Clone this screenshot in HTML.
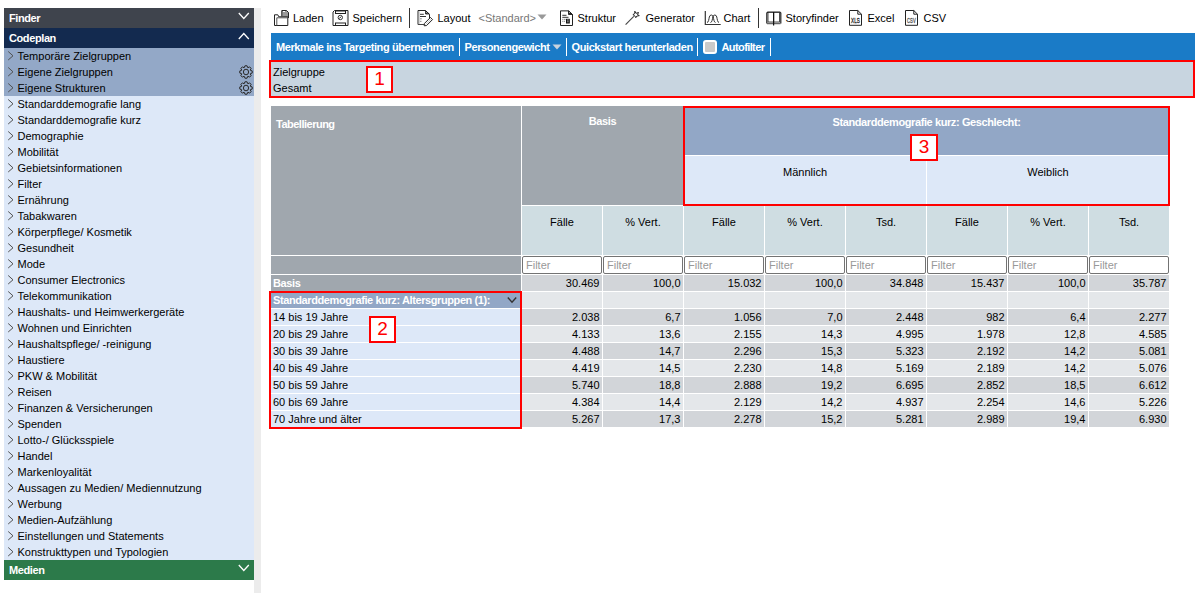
<!DOCTYPE html>
<html><head><meta charset="utf-8"><style>
*{box-sizing:border-box;margin:0;padding:0}
html,body{width:1195px;height:593px;overflow:hidden;background:#fff;font-family:"Liberation Sans",sans-serif;font-size:11px;color:#000;position:relative}
.hdr{position:absolute;left:4px;width:250px;height:20px;color:#fff;font-weight:bold;letter-spacing:-0.4px;padding-left:5px;line-height:20px}
.hchev{position:absolute;left:234px;top:4px}
.it{position:absolute;left:4px;width:250px;height:16px;line-height:16px;background:#dde8f8;padding-left:13.5px;white-space:nowrap}
.it.sel{background:#93a8c7}
.chev{position:absolute;left:3px;top:3px}
.gear{position:absolute;left:234.5px;top:1px}
.strip{position:absolute;left:254px;top:8px;width:7px;height:585px;background:#ececec}
.ico{position:absolute}
.tool{position:absolute;top:10px;height:16px;line-height:16px;white-space:nowrap}
.sep{position:absolute;top:8px;width:1px;height:20px;background:#333}
.bar{position:absolute;left:271px;top:33px;width:924px;height:27px;background:#1a7bc7;color:#fff;font-weight:bold;letter-spacing:-0.4px}
.bar span{position:absolute;top:1px;line-height:27px;white-space:nowrap}
.bsep{position:absolute;top:5px;width:1px;height:18px;background:#fff}
.zg{position:absolute;left:269px;top:60px;width:926px;height:38px;border:2px solid #f00;background:#c8d5e0}
.redbox{position:absolute;border:2px solid #f00;pointer-events:none}
.num-lbl{position:absolute;border:2px solid #f00;background:#fff;color:#f00;font-size:19px;text-align:center}
.th,.flt,.num,.rowlab{position:absolute;overflow:hidden;white-space:nowrap}
.g{background:#a0a7ae;color:#fff}
.gb{background:#92a7c6;color:#fff}
.lb{background:#dde8f8}
.ms{background:#cfdde2}
.d{background:#d2d5d9}
.l{background:#e4e7ea}
.tl{position:absolute;left:5px;top:12px;font-weight:bold;letter-spacing:-0.5px;font-size:11px}
.tb{position:absolute;left:0;right:0;top:9px;text-align:center;font-weight:bold;letter-spacing:-0.4px}
.tgs{position:absolute;left:0;right:0;top:10px;text-align:center;font-weight:bold;letter-spacing:-0.4px}
.tm{position:absolute;left:0;right:0;top:10px;text-align:center}
.tms{position:absolute;left:0;right:0;top:10px;text-align:center}
.flt{background:#fff;border:1px solid #737373;border-radius:2px;color:#999;font-size:11px;line-height:17px;padding-left:3px}
.num{text-align:right;padding-right:2.5px;line-height:16px}
.rowlab{line-height:16px;padding-left:2px}
.bl{font-weight:bold;letter-spacing:-0.4px}
.schev{position:absolute;left:236px;top:4px}
</style></head><body>
<div class="hdr" style="top:8px;background:#3f444d">Finder<svg class="hchev" width="12" height="9" viewBox="0 0 12 9"><path d="M0.8 1 L5.8 6.5 L10.8 1" fill="none" stroke="#fff" stroke-width="1.3"/></svg></div>
<div class="hdr" style="top:28px;background:#132a4f">Codeplan<svg class="hchev" width="12" height="9" viewBox="0 0 12 9"><path d="M0.8 7 L5.8 1.5 L10.8 7" fill="none" stroke="#fff" stroke-width="1.3"/></svg></div>
<div class="it sel" style="top:48px"><svg class="chev" width="8" height="12" viewBox="0 0 8 12"><path d="M1.2 0.5 L6 4.8 L1.2 9" fill="none" stroke="#505050" stroke-width="1"/></svg>Temporäre Zielgruppen</div>
<div class="it sel" style="top:64px"><svg class="chev" width="8" height="12" viewBox="0 0 8 12"><path d="M1.2 0.5 L6 4.8 L1.2 9" fill="none" stroke="#505050" stroke-width="1"/></svg>Eigene Zielgruppen<svg class="gear" width="14" height="14" viewBox="0 0 14 14"><path d="M11.40 5.34 L13.21 5.93 L13.21 8.07 L11.40 8.66 L11.28 8.94 L12.14 10.64 L10.64 12.14 L8.94 11.28 L8.66 11.40 L8.07 13.21 L5.93 13.21 L5.34 11.40 L5.06 11.28 L3.36 12.14 L1.86 10.64 L2.72 8.94 L2.60 8.66 L0.79 8.07 L0.79 5.93 L2.60 5.34 L2.72 5.06 L1.86 3.36 L3.36 1.86 L5.06 2.72 L5.34 2.60 L5.93 0.79 L8.07 0.79 L8.66 2.60 L8.94 2.72 L10.64 1.86 L12.14 3.36 L11.28 5.06 Z" fill="none" stroke="#2a2a2a" stroke-width="1"/><ellipse cx="7" cy="7" rx="2.6" ry="2.8" fill="none" stroke="#2a2a2a" stroke-width="1"/></svg></div>
<div class="it sel" style="top:80px"><svg class="chev" width="8" height="12" viewBox="0 0 8 12"><path d="M1.2 0.5 L6 4.8 L1.2 9" fill="none" stroke="#505050" stroke-width="1"/></svg>Eigene Strukturen<svg class="gear" width="14" height="14" viewBox="0 0 14 14"><path d="M11.40 5.34 L13.21 5.93 L13.21 8.07 L11.40 8.66 L11.28 8.94 L12.14 10.64 L10.64 12.14 L8.94 11.28 L8.66 11.40 L8.07 13.21 L5.93 13.21 L5.34 11.40 L5.06 11.28 L3.36 12.14 L1.86 10.64 L2.72 8.94 L2.60 8.66 L0.79 8.07 L0.79 5.93 L2.60 5.34 L2.72 5.06 L1.86 3.36 L3.36 1.86 L5.06 2.72 L5.34 2.60 L5.93 0.79 L8.07 0.79 L8.66 2.60 L8.94 2.72 L10.64 1.86 L12.14 3.36 L11.28 5.06 Z" fill="none" stroke="#2a2a2a" stroke-width="1"/><ellipse cx="7" cy="7" rx="2.6" ry="2.8" fill="none" stroke="#2a2a2a" stroke-width="1"/></svg></div>
<div class="it" style="top:96px"><svg class="chev" width="8" height="12" viewBox="0 0 8 12"><path d="M1.2 0.5 L6 4.8 L1.2 9" fill="none" stroke="#505050" stroke-width="1"/></svg>Standarddemografie lang</div>
<div class="it" style="top:112px"><svg class="chev" width="8" height="12" viewBox="0 0 8 12"><path d="M1.2 0.5 L6 4.8 L1.2 9" fill="none" stroke="#505050" stroke-width="1"/></svg>Standarddemografie kurz</div>
<div class="it" style="top:128px"><svg class="chev" width="8" height="12" viewBox="0 0 8 12"><path d="M1.2 0.5 L6 4.8 L1.2 9" fill="none" stroke="#505050" stroke-width="1"/></svg>Demographie</div>
<div class="it" style="top:144px"><svg class="chev" width="8" height="12" viewBox="0 0 8 12"><path d="M1.2 0.5 L6 4.8 L1.2 9" fill="none" stroke="#505050" stroke-width="1"/></svg>Mobilität</div>
<div class="it" style="top:160px"><svg class="chev" width="8" height="12" viewBox="0 0 8 12"><path d="M1.2 0.5 L6 4.8 L1.2 9" fill="none" stroke="#505050" stroke-width="1"/></svg>Gebietsinformationen</div>
<div class="it" style="top:176px"><svg class="chev" width="8" height="12" viewBox="0 0 8 12"><path d="M1.2 0.5 L6 4.8 L1.2 9" fill="none" stroke="#505050" stroke-width="1"/></svg>Filter</div>
<div class="it" style="top:192px"><svg class="chev" width="8" height="12" viewBox="0 0 8 12"><path d="M1.2 0.5 L6 4.8 L1.2 9" fill="none" stroke="#505050" stroke-width="1"/></svg>Ernährung</div>
<div class="it" style="top:208px"><svg class="chev" width="8" height="12" viewBox="0 0 8 12"><path d="M1.2 0.5 L6 4.8 L1.2 9" fill="none" stroke="#505050" stroke-width="1"/></svg>Tabakwaren</div>
<div class="it" style="top:224px"><svg class="chev" width="8" height="12" viewBox="0 0 8 12"><path d="M1.2 0.5 L6 4.8 L1.2 9" fill="none" stroke="#505050" stroke-width="1"/></svg>Körperpflege/ Kosmetik</div>
<div class="it" style="top:240px"><svg class="chev" width="8" height="12" viewBox="0 0 8 12"><path d="M1.2 0.5 L6 4.8 L1.2 9" fill="none" stroke="#505050" stroke-width="1"/></svg>Gesundheit</div>
<div class="it" style="top:256px"><svg class="chev" width="8" height="12" viewBox="0 0 8 12"><path d="M1.2 0.5 L6 4.8 L1.2 9" fill="none" stroke="#505050" stroke-width="1"/></svg>Mode</div>
<div class="it" style="top:272px"><svg class="chev" width="8" height="12" viewBox="0 0 8 12"><path d="M1.2 0.5 L6 4.8 L1.2 9" fill="none" stroke="#505050" stroke-width="1"/></svg>Consumer Electronics</div>
<div class="it" style="top:288px"><svg class="chev" width="8" height="12" viewBox="0 0 8 12"><path d="M1.2 0.5 L6 4.8 L1.2 9" fill="none" stroke="#505050" stroke-width="1"/></svg>Telekommunikation</div>
<div class="it" style="top:304px"><svg class="chev" width="8" height="12" viewBox="0 0 8 12"><path d="M1.2 0.5 L6 4.8 L1.2 9" fill="none" stroke="#505050" stroke-width="1"/></svg>Haushalts- und Heimwerkergeräte</div>
<div class="it" style="top:320px"><svg class="chev" width="8" height="12" viewBox="0 0 8 12"><path d="M1.2 0.5 L6 4.8 L1.2 9" fill="none" stroke="#505050" stroke-width="1"/></svg>Wohnen und Einrichten</div>
<div class="it" style="top:336px"><svg class="chev" width="8" height="12" viewBox="0 0 8 12"><path d="M1.2 0.5 L6 4.8 L1.2 9" fill="none" stroke="#505050" stroke-width="1"/></svg>Haushaltspflege/ -reinigung</div>
<div class="it" style="top:352px"><svg class="chev" width="8" height="12" viewBox="0 0 8 12"><path d="M1.2 0.5 L6 4.8 L1.2 9" fill="none" stroke="#505050" stroke-width="1"/></svg>Haustiere</div>
<div class="it" style="top:368px"><svg class="chev" width="8" height="12" viewBox="0 0 8 12"><path d="M1.2 0.5 L6 4.8 L1.2 9" fill="none" stroke="#505050" stroke-width="1"/></svg>PKW &amp; Mobilität</div>
<div class="it" style="top:384px"><svg class="chev" width="8" height="12" viewBox="0 0 8 12"><path d="M1.2 0.5 L6 4.8 L1.2 9" fill="none" stroke="#505050" stroke-width="1"/></svg>Reisen</div>
<div class="it" style="top:400px"><svg class="chev" width="8" height="12" viewBox="0 0 8 12"><path d="M1.2 0.5 L6 4.8 L1.2 9" fill="none" stroke="#505050" stroke-width="1"/></svg>Finanzen &amp; Versicherungen</div>
<div class="it" style="top:416px"><svg class="chev" width="8" height="12" viewBox="0 0 8 12"><path d="M1.2 0.5 L6 4.8 L1.2 9" fill="none" stroke="#505050" stroke-width="1"/></svg>Spenden</div>
<div class="it" style="top:432px"><svg class="chev" width="8" height="12" viewBox="0 0 8 12"><path d="M1.2 0.5 L6 4.8 L1.2 9" fill="none" stroke="#505050" stroke-width="1"/></svg>Lotto-/ Glücksspiele</div>
<div class="it" style="top:448px"><svg class="chev" width="8" height="12" viewBox="0 0 8 12"><path d="M1.2 0.5 L6 4.8 L1.2 9" fill="none" stroke="#505050" stroke-width="1"/></svg>Handel</div>
<div class="it" style="top:464px"><svg class="chev" width="8" height="12" viewBox="0 0 8 12"><path d="M1.2 0.5 L6 4.8 L1.2 9" fill="none" stroke="#505050" stroke-width="1"/></svg>Markenloyalität</div>
<div class="it" style="top:480px"><svg class="chev" width="8" height="12" viewBox="0 0 8 12"><path d="M1.2 0.5 L6 4.8 L1.2 9" fill="none" stroke="#505050" stroke-width="1"/></svg>Aussagen zu Medien/ Mediennutzung</div>
<div class="it" style="top:496px"><svg class="chev" width="8" height="12" viewBox="0 0 8 12"><path d="M1.2 0.5 L6 4.8 L1.2 9" fill="none" stroke="#505050" stroke-width="1"/></svg>Werbung</div>
<div class="it" style="top:512px"><svg class="chev" width="8" height="12" viewBox="0 0 8 12"><path d="M1.2 0.5 L6 4.8 L1.2 9" fill="none" stroke="#505050" stroke-width="1"/></svg>Medien-Aufzählung</div>
<div class="it" style="top:528px"><svg class="chev" width="8" height="12" viewBox="0 0 8 12"><path d="M1.2 0.5 L6 4.8 L1.2 9" fill="none" stroke="#505050" stroke-width="1"/></svg>Einstellungen und Statements</div>
<div class="it" style="top:544px"><svg class="chev" width="8" height="12" viewBox="0 0 8 12"><path d="M1.2 0.5 L6 4.8 L1.2 9" fill="none" stroke="#505050" stroke-width="1"/></svg>Konstrukttypen und Typologien</div>
<div class="hdr" style="top:560px;background:#2c7a4a">Medien<svg class="hchev" width="12" height="9" viewBox="0 0 12 9"><path d="M0.8 1 L5.8 6.5 L10.8 1" fill="none" stroke="#fff" stroke-width="1.3"/></svg></div>
<div class="strip"></div>
<svg class="ico" style="left:271px;top:8px" width="20" height="20" viewBox="0 0 20 20"><path d="M10.8 8.5 V2.5 H15.5 L17.5 4.5 V10" fill="#9a9a9a" stroke="#222" stroke-width="1"/><path d="M12 3.5 h2" stroke="#fff" stroke-width="1"/><path d="M3.5 17.5 V6.8 H6.8 L7.8 8.8 H16.8 V17.5 Z" fill="#fff" stroke="#222" stroke-width="1"/><path d="M5.8 17.5 V9.8 H16.8" fill="none" stroke="#555" stroke-width="1"/></svg>
<div class="tool" style="left:293px">Laden</div>
<svg class="ico" style="left:330px;top:8px" width="20" height="20" viewBox="0 0 20 20"><path d="M3 17.5 V4 L4.5 2.5 H18 V17.5 Z" fill="#fff" stroke="#222" stroke-width="1"/><path d="M17.5 3 V17" stroke="#888" stroke-width="1.2"/><rect x="5.5" y="3" width="10" height="2.5" fill="#fff" stroke="#222" stroke-width="1"/><circle cx="10.3" cy="9.5" r="2.2" fill="none" stroke="#333" stroke-width="1"/><path d="M9.3 10.5 L11 8.7" stroke="#111" stroke-width="1"/><rect x="5.5" y="15" width="10" height="2.5" fill="#fff" stroke="#222" stroke-width="1"/></svg>
<div class="tool" style="left:352.5px">Speichern</div>
<div class="sep" style="left:409px"></div>
<svg class="ico" style="left:415px;top:8px" width="20" height="20" viewBox="0 0 20 20"><path d="M3 16.5 V2.5 H10.5 L14.5 6.5 V11" fill="#fff" stroke="#222" stroke-width="1"/><path d="M3.9 3.2 V16" stroke="#999" stroke-width="1"/><path d="M10.6 2.8 V6 H14.3 Z" fill="#333" stroke="#111" stroke-width="0.8"/><path d="M11.3 4.4 L12.3 5.2" stroke="#fff" stroke-width="0.8"/><path d="M3 16.5 H9" stroke="#444" stroke-width="1"/><path d="M5 6.3 H8.8 M5 8.5 H11" stroke="#333" stroke-width="1"/><path d="M5 10.8 H6.8 M5 13.3 H6.5" stroke="#888" stroke-width="1"/><path d="M15.44 9.44 L17.56 11.56 L11.56 17.56 L9.2 17.8 L9.44 15.44 Z" fill="#fff" stroke="#222" stroke-width="1"/><path d="M10.6 16.6 L16.4 10.8" stroke="#bbb" stroke-width="0.8"/></svg>
<div class="tool" style="left:437.5px">Layout</div>
<div class="tool" style="left:478.5px;color:#777">&lt;Standard&gt;</div>
<svg class="ico" style="left:537px;top:14px" width="10" height="6" viewBox="0 0 10 6"><path d="M0.5 0.5 H9.5 L5 5.5 Z" fill="#999"/></svg>
<svg class="ico" style="left:557px;top:8px" width="20" height="20" viewBox="0 0 20 20"><path d="M3.5 17.5 V2.8 H11.5 L15.5 6.8 V17.5 Z" fill="#fff" stroke="#222" stroke-width="1"/><path d="M4 3.2 H11" stroke="#999" stroke-width="0.8"/><path d="M11.5 2.8 V6.5 H15.5 Z" fill="#222" stroke="#111" stroke-width="0.8"/><path d="M12.2 4.3 L13 5.1" stroke="#fff" stroke-width="0.8"/><path d="M5.3 7.3 H9.5 M5.3 9.3 H11.5" stroke="#333" stroke-width="1"/><path d="M5.3 11.3 H9 M5.3 13.3 H8.5" stroke="#777" stroke-width="1" stroke-dasharray="1 0.6"/><rect x="9" y="10.8" width="3.8" height="4.7" fill="#111"/><path d="M10 12 H11.8 M10 13.8 H11.8" stroke="#ddd" stroke-width="0.7"/></svg>
<div class="tool" style="left:577.5px">Struktur</div>
<svg class="ico" style="left:622px;top:8px" width="20" height="20" viewBox="0 0 20 20"><path d="M3.6 16.6 L11.8 8.4" stroke="#444" stroke-width="1.1"/><path d="M12.8 3.2 L14.1 5.3 L16.5 4.5 L15.5 6.6 L17.3 7.6 L14.8 8.1 L13.8 9.7 L12.8 7.9 L10.9 6.6 L12.8 5.6 Z" fill="#fff" stroke="#222" stroke-width="1"/></svg>
<div class="tool" style="left:645.5px">Generator</div>
<svg class="ico" style="left:702px;top:8px" width="20" height="20" viewBox="0 0 20 20"><path d="M3.3 3 V16.5 H18.7" fill="none" stroke="#333" stroke-width="1.2"/><path d="M5 14.5 C6.6 14.5 6.9 11 7.3 9 Q7.8 7 9.3 7 Q10.8 7 11.3 9 C11.7 11 12 14.5 13.5 14.5" fill="none" stroke="#333" stroke-width="1"/><path d="M8.5 14.5 C10.1 14.5 10.4 11 10.8 9 Q11.3 7 12.8 7 Q14.3 7 14.8 9 C15.2 11 15.5 14.5 17 14.5" fill="none" stroke="#333" stroke-width="1"/></svg>
<div class="tool" style="left:723.5px">Chart</div>
<div class="sep" style="left:758px"></div>
<svg class="ico" style="left:764px;top:8px" width="20" height="20" viewBox="0 0 20 20"><path d="M2.8 15.5 V5 L3.8 4 H15.8 L16.8 5 V15.5" fill="none" stroke="#222" stroke-width="1.2"/><rect x="4" y="4.5" width="5.5" height="9.5" fill="#fff" stroke="#222" stroke-width="0.8"/><rect x="9.7" y="4.5" width="5.8" height="9.5" fill="#fff" stroke="#222" stroke-width="0.8"/><path d="M3 15.5 H16.5" stroke="#666" stroke-width="1.5"/><path d="M9.6 4 V17.5" stroke="#111" stroke-width="1.2"/></svg>
<div class="tool" style="left:785.5px">Storyfinder</div>
<svg class="ico" style="left:846px;top:8px" width="20" height="20" viewBox="0 0 20 20"><path d="M3.5 17.3 V2.5 H11.8 L15.5 6.2 V17.3 Z" fill="#fff" stroke="#222" stroke-width="1"/><path d="M11.8 2.5 V6.2 H15.5" fill="none" stroke="#222" stroke-width="1"/><text x="9.4" y="14.6" font-family="Liberation Sans" font-size="6.8" text-anchor="middle" fill="#222" stroke="#222" stroke-width="0.3" textLength="8.6" lengthAdjust="spacingAndGlyphs">XLS</text></svg>
<div class="tool" style="left:867.5px">Excel</div>
<svg class="ico" style="left:902px;top:8px" width="20" height="20" viewBox="0 0 20 20"><path d="M3.5 17.3 V2.5 H11.8 L15.5 6.2 V17.3 Z" fill="#fff" stroke="#222" stroke-width="1"/><path d="M11.8 2.5 V6.2 H15.5" fill="none" stroke="#222" stroke-width="1"/><text x="9.4" y="14.6" font-family="Liberation Sans" font-size="6.8" text-anchor="middle" fill="#555" stroke="#555" stroke-width="0.3" textLength="8.6" lengthAdjust="spacingAndGlyphs">CSV</text></svg>
<div class="tool" style="left:923.5px">CSV</div>
<div class="bar">
<span style="left:5px">Merkmale ins Targeting übernehmen</span>
<div class="bsep" style="left:188px"></div>
<span style="left:193.5px">Personengewicht</span>
<svg style="position:absolute;left:281px;top:10.5px" width="10" height="6" viewBox="0 0 10 6"><path d="M0.5 0.5 H9.5 L5 5.5 Z" fill="#c8d3de"/></svg>
<div class="bsep" style="left:295px"></div>
<span style="left:300.5px">Quickstart herunterladen</span>
<div class="bsep" style="left:426px"></div>
<div style="position:absolute;left:432px;top:7px;width:14px;height:14px;border:2px solid #fff;border-radius:3px;background:#cacaca"></div>
<span style="left:450.5px;letter-spacing:-0.6px">Autofilter</span>
<div class="bsep" style="left:499px"></div>
</div>
<div class="zg"><div style="position:absolute;left:2px;top:2px;line-height:16px">Zielgruppe<br>Gesamt</div></div>
<div class="num-lbl" style="left:366px;top:66px;width:27px;height:27px;line-height:22px">1</div>
<div class="th g" style="left:271px;top:106px;width:250px;height:149px;"><span class="tl">Tabellierung</span></div>
<div class="th g" style="left:522px;top:106px;width:161px;height:99px;"><span class="tb">Basis</span></div>
<div class="th gb" style="left:684px;top:106px;width:485px;height:49px;"><span class="tgs">Standarddemografie kurz: Geschlecht:</span></div>
<div class="th lb" style="left:684px;top:156px;width:242px;height:49px;"><span class="tm">Männlich</span></div>
<div class="th lb" style="left:927px;top:156px;width:242px;height:49px;"><span class="tm">Weiblich</span></div>
<div class="th ms" style="left:522px;top:206px;width:80px;height:49px;"><span class="tms">Fälle</span></div>
<div class="th ms" style="left:603px;top:206px;width:80px;height:49px;"><span class="tms">% Vert.</span></div>
<div class="th ms" style="left:684px;top:206px;width:80px;height:49px;"><span class="tms">Fälle</span></div>
<div class="th ms" style="left:765px;top:206px;width:80px;height:49px;"><span class="tms">% Vert.</span></div>
<div class="th ms" style="left:846px;top:206px;width:80px;height:49px;"><span class="tms">Tsd.</span></div>
<div class="th ms" style="left:927px;top:206px;width:80px;height:49px;"><span class="tms">Fälle</span></div>
<div class="th ms" style="left:1008px;top:206px;width:80px;height:49px;"><span class="tms">% Vert.</span></div>
<div class="th ms" style="left:1089px;top:206px;width:80px;height:49px;"><span class="tms">Tsd.</span></div>
<div class="th g" style="left:271px;top:256px;width:250px;height:18px;"></div>
<div class="flt" style="left:522px;top:256px;width:80px;height:18px;"><span>Filter</span></div>
<div class="flt" style="left:603px;top:256px;width:80px;height:18px;"><span>Filter</span></div>
<div class="flt" style="left:684px;top:256px;width:80px;height:18px;"><span>Filter</span></div>
<div class="flt" style="left:765px;top:256px;width:80px;height:18px;"><span>Filter</span></div>
<div class="flt" style="left:846px;top:256px;width:80px;height:18px;"><span>Filter</span></div>
<div class="flt" style="left:927px;top:256px;width:80px;height:18px;"><span>Filter</span></div>
<div class="flt" style="left:1008px;top:256px;width:80px;height:18px;"><span>Filter</span></div>
<div class="flt" style="left:1089px;top:256px;width:80px;height:18px;"><span>Filter</span></div>
<div class="rowlab g" style="left:271px;top:275px;width:250px;height:16px;"><span class="bl">Basis</span></div>
<div class="num d" style="left:522px;top:275px;width:80px;height:16px;">30.469</div>
<div class="num d" style="left:603px;top:275px;width:80px;height:16px;">100,0</div>
<div class="num d" style="left:684px;top:275px;width:80px;height:16px;">15.032</div>
<div class="num d" style="left:765px;top:275px;width:80px;height:16px;">100,0</div>
<div class="num d" style="left:846px;top:275px;width:80px;height:16px;">34.848</div>
<div class="num d" style="left:927px;top:275px;width:80px;height:16px;">15.437</div>
<div class="num d" style="left:1008px;top:275px;width:80px;height:16px;">100,0</div>
<div class="num d" style="left:1089px;top:275px;width:80px;height:16px;">35.787</div>
<div class="rowlab gb" style="left:271px;top:292px;width:250px;height:16px;"><span class="bl">Standarddemografie kurz: Altersgruppen (1):</span><svg class="schev" width="12" height="8" viewBox="0 0 12 8"><path d="M0.8 1.5 L5 6.2 L9.2 1.5" fill="none" stroke="#333" stroke-width="1.4"/></svg></div>
<div class="num l" style="left:522px;top:292px;width:80px;height:16px;"></div>
<div class="num l" style="left:603px;top:292px;width:80px;height:16px;"></div>
<div class="num l" style="left:684px;top:292px;width:80px;height:16px;"></div>
<div class="num l" style="left:765px;top:292px;width:80px;height:16px;"></div>
<div class="num l" style="left:846px;top:292px;width:80px;height:16px;"></div>
<div class="num l" style="left:927px;top:292px;width:80px;height:16px;"></div>
<div class="num l" style="left:1008px;top:292px;width:80px;height:16px;"></div>
<div class="num l" style="left:1089px;top:292px;width:80px;height:16px;"></div>
<div class="rowlab lb" style="left:271px;top:309px;width:250px;height:16px;">14 bis 19 Jahre</div>
<div class="num d" style="left:522px;top:309px;width:80px;height:16px;">2.038</div>
<div class="num d" style="left:603px;top:309px;width:80px;height:16px;">6,7</div>
<div class="num d" style="left:684px;top:309px;width:80px;height:16px;">1.056</div>
<div class="num d" style="left:765px;top:309px;width:80px;height:16px;">7,0</div>
<div class="num d" style="left:846px;top:309px;width:80px;height:16px;">2.448</div>
<div class="num d" style="left:927px;top:309px;width:80px;height:16px;">982</div>
<div class="num d" style="left:1008px;top:309px;width:80px;height:16px;">6,4</div>
<div class="num d" style="left:1089px;top:309px;width:80px;height:16px;">2.277</div>
<div class="rowlab lb" style="left:271px;top:326px;width:250px;height:16px;">20 bis 29 Jahre</div>
<div class="num l" style="left:522px;top:326px;width:80px;height:16px;">4.133</div>
<div class="num l" style="left:603px;top:326px;width:80px;height:16px;">13,6</div>
<div class="num l" style="left:684px;top:326px;width:80px;height:16px;">2.155</div>
<div class="num l" style="left:765px;top:326px;width:80px;height:16px;">14,3</div>
<div class="num l" style="left:846px;top:326px;width:80px;height:16px;">4.995</div>
<div class="num l" style="left:927px;top:326px;width:80px;height:16px;">1.978</div>
<div class="num l" style="left:1008px;top:326px;width:80px;height:16px;">12,8</div>
<div class="num l" style="left:1089px;top:326px;width:80px;height:16px;">4.585</div>
<div class="rowlab lb" style="left:271px;top:343px;width:250px;height:16px;">30 bis 39 Jahre</div>
<div class="num d" style="left:522px;top:343px;width:80px;height:16px;">4.488</div>
<div class="num d" style="left:603px;top:343px;width:80px;height:16px;">14,7</div>
<div class="num d" style="left:684px;top:343px;width:80px;height:16px;">2.296</div>
<div class="num d" style="left:765px;top:343px;width:80px;height:16px;">15,3</div>
<div class="num d" style="left:846px;top:343px;width:80px;height:16px;">5.323</div>
<div class="num d" style="left:927px;top:343px;width:80px;height:16px;">2.192</div>
<div class="num d" style="left:1008px;top:343px;width:80px;height:16px;">14,2</div>
<div class="num d" style="left:1089px;top:343px;width:80px;height:16px;">5.081</div>
<div class="rowlab lb" style="left:271px;top:360px;width:250px;height:16px;">40 bis 49 Jahre</div>
<div class="num l" style="left:522px;top:360px;width:80px;height:16px;">4.419</div>
<div class="num l" style="left:603px;top:360px;width:80px;height:16px;">14,5</div>
<div class="num l" style="left:684px;top:360px;width:80px;height:16px;">2.230</div>
<div class="num l" style="left:765px;top:360px;width:80px;height:16px;">14,8</div>
<div class="num l" style="left:846px;top:360px;width:80px;height:16px;">5.169</div>
<div class="num l" style="left:927px;top:360px;width:80px;height:16px;">2.189</div>
<div class="num l" style="left:1008px;top:360px;width:80px;height:16px;">14,2</div>
<div class="num l" style="left:1089px;top:360px;width:80px;height:16px;">5.076</div>
<div class="rowlab lb" style="left:271px;top:377px;width:250px;height:16px;">50 bis 59 Jahre</div>
<div class="num d" style="left:522px;top:377px;width:80px;height:16px;">5.740</div>
<div class="num d" style="left:603px;top:377px;width:80px;height:16px;">18,8</div>
<div class="num d" style="left:684px;top:377px;width:80px;height:16px;">2.888</div>
<div class="num d" style="left:765px;top:377px;width:80px;height:16px;">19,2</div>
<div class="num d" style="left:846px;top:377px;width:80px;height:16px;">6.695</div>
<div class="num d" style="left:927px;top:377px;width:80px;height:16px;">2.852</div>
<div class="num d" style="left:1008px;top:377px;width:80px;height:16px;">18,5</div>
<div class="num d" style="left:1089px;top:377px;width:80px;height:16px;">6.612</div>
<div class="rowlab lb" style="left:271px;top:394px;width:250px;height:16px;">60 bis 69 Jahre</div>
<div class="num l" style="left:522px;top:394px;width:80px;height:16px;">4.384</div>
<div class="num l" style="left:603px;top:394px;width:80px;height:16px;">14,4</div>
<div class="num l" style="left:684px;top:394px;width:80px;height:16px;">2.129</div>
<div class="num l" style="left:765px;top:394px;width:80px;height:16px;">14,2</div>
<div class="num l" style="left:846px;top:394px;width:80px;height:16px;">4.937</div>
<div class="num l" style="left:927px;top:394px;width:80px;height:16px;">2.254</div>
<div class="num l" style="left:1008px;top:394px;width:80px;height:16px;">14,6</div>
<div class="num l" style="left:1089px;top:394px;width:80px;height:16px;">5.226</div>
<div class="rowlab lb" style="left:271px;top:411px;width:250px;height:16px;">70 Jahre und älter</div>
<div class="num d" style="left:522px;top:411px;width:80px;height:16px;">5.267</div>
<div class="num d" style="left:603px;top:411px;width:80px;height:16px;">17,3</div>
<div class="num d" style="left:684px;top:411px;width:80px;height:16px;">2.278</div>
<div class="num d" style="left:765px;top:411px;width:80px;height:16px;">15,2</div>
<div class="num d" style="left:846px;top:411px;width:80px;height:16px;">5.281</div>
<div class="num d" style="left:927px;top:411px;width:80px;height:16px;">2.989</div>
<div class="num d" style="left:1008px;top:411px;width:80px;height:16px;">19,4</div>
<div class="num d" style="left:1089px;top:411px;width:80px;height:16px;">6.930</div>
<div class="redbox" style="left:683px;top:106px;width:487px;height:100px"></div>
<div class="redbox" style="left:269px;top:291px;width:253px;height:138px"></div>
<div class="num-lbl" style="left:910px;top:134px;width:28px;height:27px;line-height:22px">3</div>
<div class="num-lbl" style="left:369px;top:316px;width:27px;height:27px;line-height:22px">2</div>
</body></html>
